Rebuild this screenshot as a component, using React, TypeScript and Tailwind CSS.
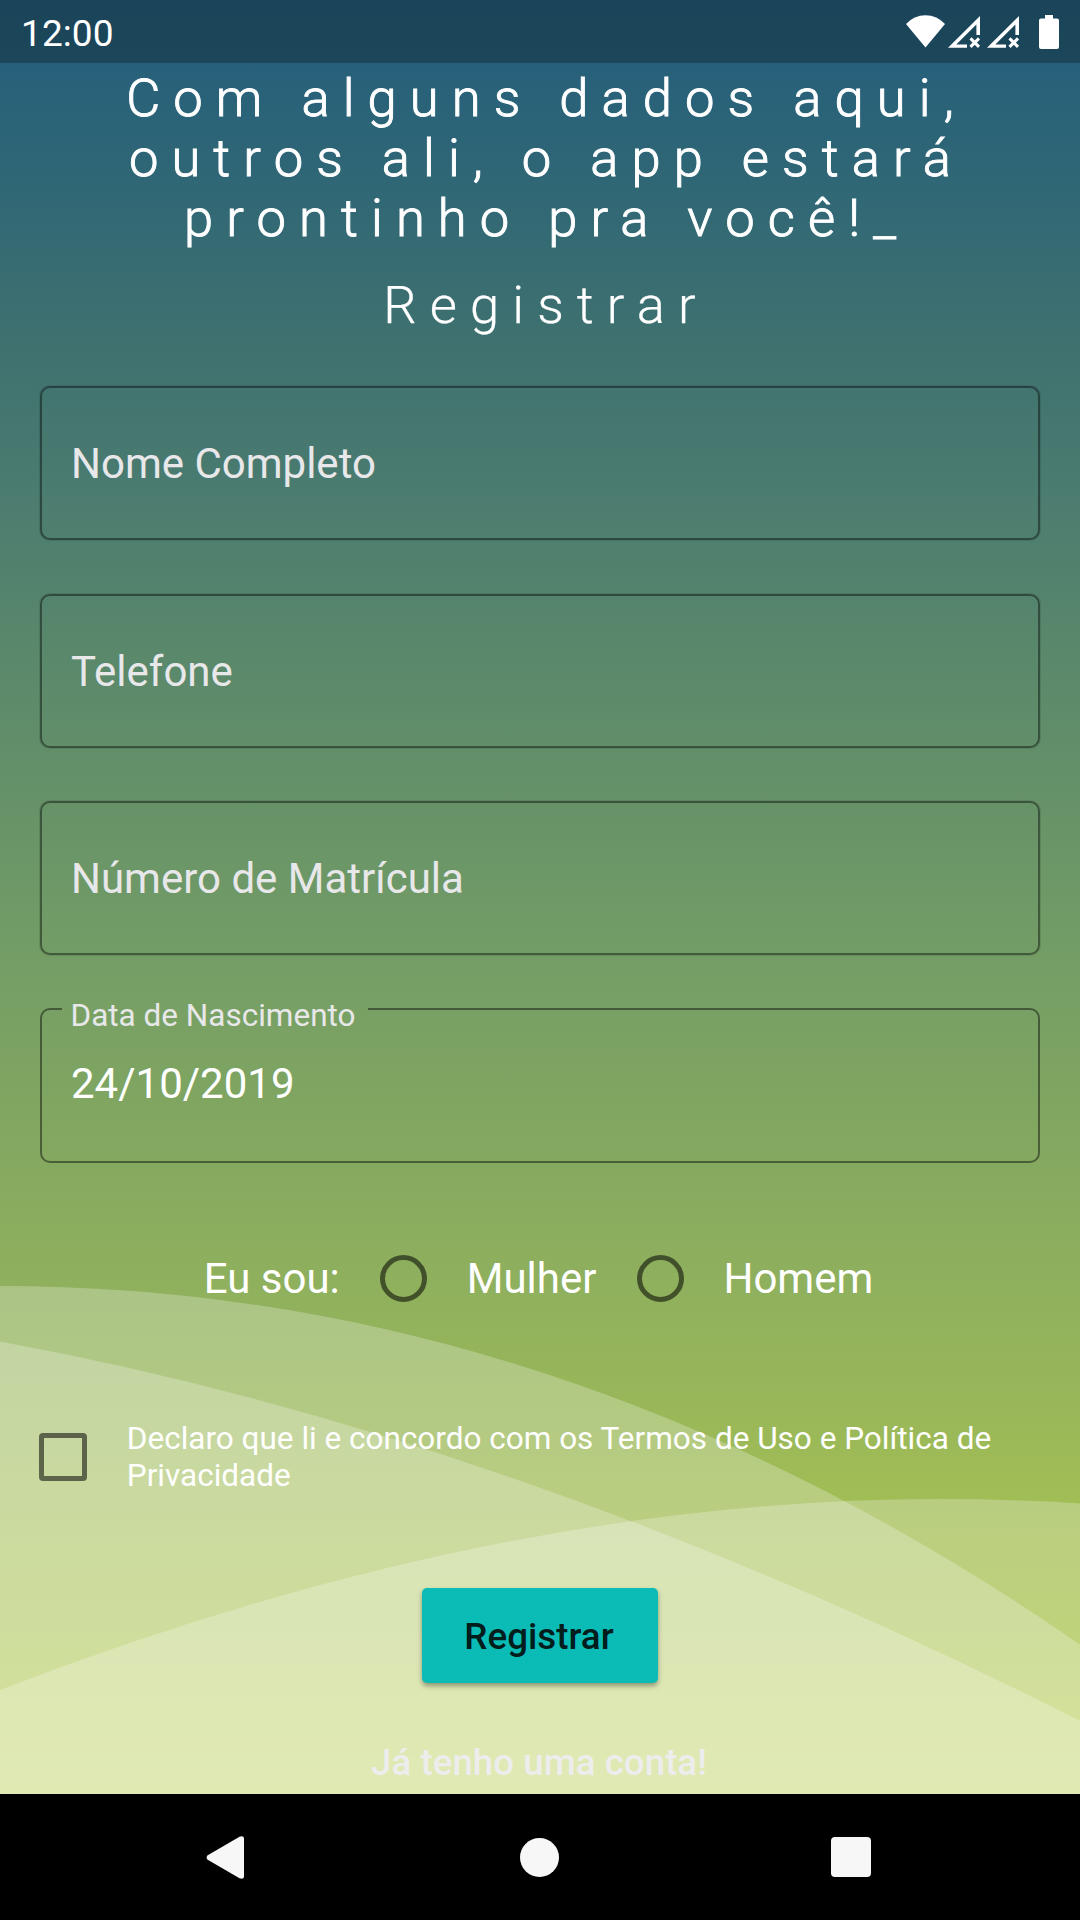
import React from "react";

const FIELDS = ["Nome Completo", "Telefone", "Número de Matrícula"];

function Backdrop() {
  return (
    <svg className="absolute inset-0 h-full w-full" viewBox="0 0 1080 1920" fill="#fff" fillOpacity="0.25" aria-hidden="true">
      <path d="M0 1286 Q563 1286 1080 1644.7 V1920 H0 Z" />
      <path d="M0 1341.6 Q520 1437 1080 1721 V1920 H0 Z" />
      <path d="M0 1690 Q496 1499 939 1499 Q1010 1499 1080 1503.5 V1920 H0 Z" />
    </svg>
  );
}

function SignalIcon() {
  return (
    <svg className="h-[33px] w-[33px]" viewBox="0 0 33 33" aria-hidden="true">
      <path fill="#fff" fillRule="evenodd" d="M32 0 V19 H28.4 V8.6 L8.3 28.6 H19 V31.8 H0 Z" />
      <path stroke="#fff" strokeWidth="3" d="M22.5 22.4 L31 30.9 M31 22.4 L22.5 30.9" />
    </svg>
  );
}

function StatusBar() {
  return (
    <header className="flex h-[63px] shrink-0 items-center justify-between bg-black/27 pr-[21px] pl-[21px] text-white">
      <span className="pt-[3px] text-[37px] leading-none tracking-[0.1px]">12:00</span>
      <div className="flex items-start">
        <svg className="h-[33px] w-[39px]" viewBox="0 0 39 33" fill="#fff" aria-hidden="true">
          <path d="M19.5 32.6 L0 9 Q8 0.2 19.5 0.2 Q31 0.2 39 9 Z" />
        </svg>
        <div className="mt-px ml-[3px] flex gap-[6px]">
          <SignalIcon />
          <SignalIcon />
        </div>
        <svg className="ml-[19px] h-[34px] w-[20px]" viewBox="0 0 20 34" fill="#fff" aria-hidden="true">
          <path d="M6 0 H14 V3.4 H18 Q20 3.4 20 5.4 V32 Q20 34 18 34 H2 Q0 34 0 32 V5.4 Q0 3.4 2 3.4 H6 Z" />
        </svg>
      </div>
    </header>
  );
}

function Radio({ label }: { label: string }) {
  return (
    <label className="flex items-center">
      <span className="mt-px h-[47px] w-[47px] rounded-full border-[5.25px] border-black/54" />
      <span className="ml-[39.5px] pt-[2px]">{label}</span>
    </label>
  );
}

export default function App() {
  return (
    <div className="relative flex h-[1920px] w-[1080px] flex-col overflow-hidden bg-[linear-gradient(180deg,#255e7c_0px,#27607a_63px,#316875_200px,#3f716f_345px,#4a7b70_480px,#55856c_610px,#638f69_760px,#769f65_985px,#84a860_1150px,#92b25c_1320px,#a1bd56_1500px,#aac44f_1640px,#b8cd4b_1794px)] font-['Roboto',sans-serif] text-[42px] leading-[50px] text-white">
      <Backdrop />
      <div className="relative flex flex-1 flex-col">
        <StatusBar />

        <main className="flex flex-1 flex-col px-[40px]">
          <h1 className="mt-[5px] pl-[13px] text-center text-[52.5px] leading-[60px] font-light tracking-[13.1px] whitespace-nowrap [-webkit-text-stroke:0.9px_white]">
            Com alguns dados aqui,
            <br />
            outros ali, o app estará
            <br />
            prontinho pra você!_
          </h1>
          <h2 className="mt-[27px] pl-[12px] text-center text-[52.5px] leading-[60px] font-light tracking-[13.1px] [-webkit-text-stroke:0.25px_white]">Registrar</h2>

          <div className="mt-[51px] flex flex-col gap-[53.5px]">
            {FIELDS.map((name) => (
              <div key={name} className="flex h-[154px] items-center rounded-[10px] border-2 border-black/42 pt-[2px] pl-[29px] text-[#e8e8ea] shadow-[0_0_0_1px_rgba(0,0,0,0.1)]">
                {name}
              </div>
            ))}
            <fieldset className="-mt-[17.5px] h-[172px] rounded-[10px] border-2 border-black/44 pl-[20px]">
              <legend className="h-[36px] pr-[12.5px] pl-[8.5px] text-[31.5px] leading-[49px] text-[#e8e8ea]">Data de Nascimento</legend>
              <div className="mt-[31.5px] pl-[9px]">24/10/2019</div>
            </fieldset>
          </div>

          <div className="mt-[90px] flex h-[50px] items-center justify-center gap-[40.5px] pr-[3px]">
            <span className="pt-[2px]">Eu sou:</span>
            <Radio label="Mulher" />
            <Radio label="Homem" />
          </div>

          <label className="mt-[117px] -ml-px flex items-center text-[31.5px] leading-[37px]">
            <span className="h-[47.5px] w-[47.5px] shrink-0 rounded-[4px] border-[5.25px] border-black/54" />
            <span className="ml-[40.3px]">
              Declaro que li e concordo com os Termos de Uso e Política de
              <br />
              Privacidade
            </span>
          </label>

          <button className="mt-[94px] h-[95px] w-[236px] self-center rounded-[5px] bg-[#0bbbb6] pt-[3px] pr-[2px] text-[36.75px] font-medium text-black/87 shadow-[0_3px_5px_rgba(0,0,0,0.35)]">
            Registrar
          </button>
          <a className="mt-[55px] self-center pr-[2px] text-[36.75px] font-medium text-[#ededed]">Já tenho uma conta!</a>
        </main>

        <nav className="flex h-[126px] shrink-0 items-center bg-black pl-[206px]">
          <svg className="h-[43px] w-[38px]" viewBox="0 0 38 43" fill="#f7f7f7" aria-hidden="true">
            <path d="M1.3 19.4 L33.5 0.7 Q38 -0.8 38 3 V40 Q38 43.8 33.5 42.3 L1.3 23.6 Q0 21.5 1.3 19.4 Z" />
          </svg>
          <span className="ml-[276px] h-[39px] w-[39px] rounded-full bg-[#f7f7f7]" />
          <span className="ml-[272px] h-[40px] w-[40px] rounded-[4px] bg-[#f7f7f7]" />
        </nav>
      </div>
    </div>
  );
}
